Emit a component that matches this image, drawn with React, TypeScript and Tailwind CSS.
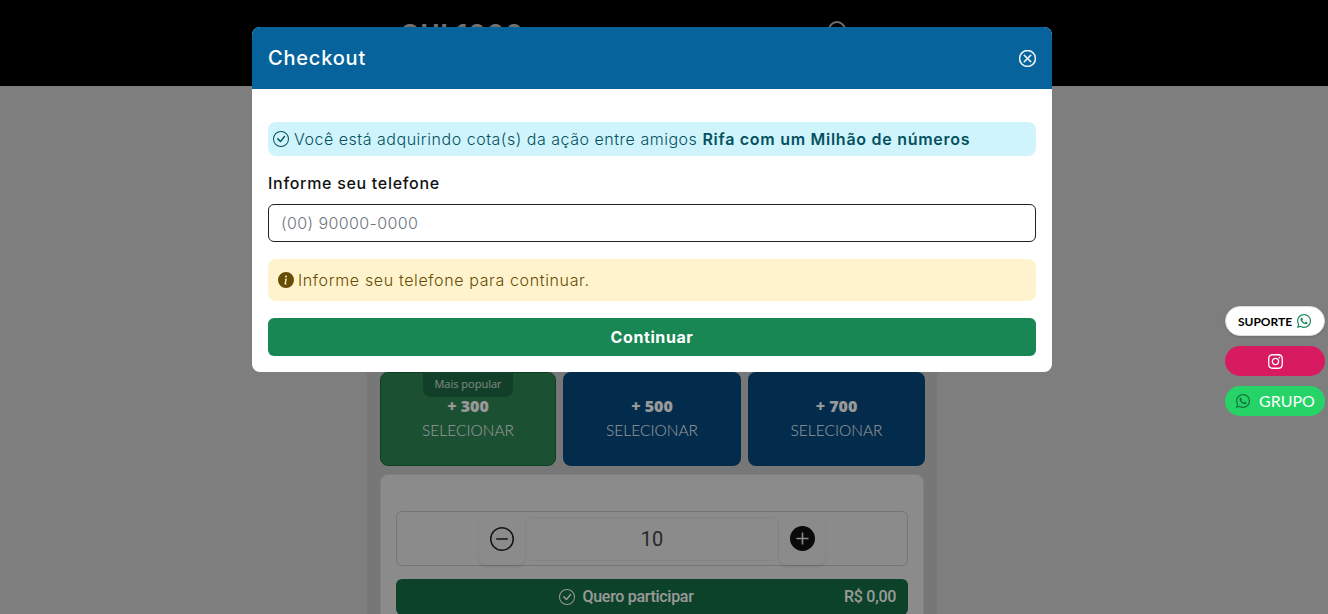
import { BsCheckCircle, BsXCircle, BsDashCircle, BsPlusCircleFill, BsInfoCircleFill } from "react-icons/bs";
import { FaWhatsapp, FaInstagram } from "react-icons/fa";
import { Search } from "lucide-react";

const inter = "font-['Inter',sans-serif]";

function Pack({ n, popular, width }: { n: string; popular?: boolean; width: string }) {
  return (
    <div className={`relative h-[94px] ${width} rounded-lg flex flex-col items-center ${popular ? "pt-[22px] bg-[#2f8555] border border-[#1a6a3e]" : "pt-[23px] bg-[#04487f]"}`}>
      {popular && (
        <div className="absolute top-[-1px] left-1/2 -translate-x-1/2 w-[90px] h-[25px] rounded-b-lg bg-[#1e6a42] text-white/80 text-[11px] leading-[24px] text-center font-['Open_Sans',sans-serif]">
          Mais popular
        </div>
      )}
      <div className="font-['Noto_Sans',sans-serif] font-black text-[16px] leading-[22px] text-white">+ {n}</div>
      <div className="font-['Lato',sans-serif] font-light text-[15.5px] leading-[26px] text-white">SELECIONAR</div>
    </div>
  );
}

export default function App() {
  return (
    <div className="relative h-[614px] w-[1328px] overflow-hidden bg-[#d2d2d2]">
      <header className="h-[86px] bg-black flex text-[#bbbbbb] overflow-hidden">
        <div className="ml-[400px] mt-[22px] font-['Inter',sans-serif] font-bold text-[26px] leading-[24px] w-[426px] tracking-[1px]">GUI 1000</div>
        <Search size={24} strokeWidth={2} className="mt-[19px]" />
      </header>
      <main className="ml-[367px] w-[570px] h-[528px] bg-[#c6c6c6] pl-[13px] pr-[12px] pt-[286px]">
        <div className="flex gap-[7px]">
          <Pack n="300" popular width="w-[176px]" />
          <Pack n="500" width="w-[178px]" />
          <Pack n="700" width="w-[177px]" />
        </div>
        <div className="mt-[8px] rounded-lg bg-[#e8e8e8] border border-[#d6d6d6] h-[200px] w-[544px] px-[15px] pt-[36px]">
          <div className="h-[55px] rounded-md border border-[#c4c4c4] flex justify-center items-center">
            <button className="w-[46px] h-[52px] rounded-lg bg-[#e8e8e8] shadow-[0_2px_3px_rgba(0,0,0,0.08)] flex items-center justify-center text-[#222]"><BsDashCircle size={24} /></button>
            <div className="w-[254px] h-[44px] rounded-lg border border-[#dcdcdc] text-center font-['Roboto',sans-serif] text-[20px] leading-[42px] text-[#444]">10</div>
            <button className="w-[46px] h-[52px] rounded-lg bg-[#e8e8e8] shadow-[0_2px_3px_rgba(0,0,0,0.08)] flex items-center justify-center text-[#111]"><BsPlusCircleFill size={25} /></button>
          </div>
          <div className="mt-[13px] h-[36px] rounded-md bg-[#156f45] flex items-center pl-[12px] pr-[12px] font-['Roboto',sans-serif] font-medium text-[16px] tracking-[-0.3px] text-white">
            <div className="flex-1 flex items-center justify-center">
              <BsCheckCircle size={16} className="mr-[8px]" /> Quero participar
            </div>
            <span>R$ 0,00</span>
          </div>
        </div>
      </main>

      <div className="absolute inset-0 bg-black/40" />

      <div className="absolute right-[3px] top-[306px] flex flex-col gap-[10px] w-[100px]">
        <div className="h-[30px] rounded-full bg-white border border-[#ddd] shadow flex items-center justify-center gap-[4px] font-['Lato',sans-serif] font-bold text-[12px] text-black">
          <span className="mt-[1px]">SUPORTE</span> <FaWhatsapp size={16} className="text-[#198754]" />
        </div>
        <div className="h-[30px] rounded-full bg-[#d81b60] flex items-center justify-center text-white"><FaInstagram size={17} /></div>
        <div className="h-[30px] rounded-full bg-[#25d366] flex items-center justify-center gap-[8px] font-['Lato',sans-serif] text-[16px] text-white">
          <FaWhatsapp size={16} className="text-[#14713a]" /> GRUPO
        </div>
      </div>

      <div className={`absolute left-[252px] top-[27px] w-[800px] rounded-lg bg-white overflow-hidden ${inter}`}>
        <div className="h-[62px] bg-[#06639b] flex items-center justify-between pl-[16px] pr-[16px] text-white">
          <h5 className="text-[20px] font-medium tracking-[0.8px]">Checkout</h5>
          <BsXCircle size={17} strokeWidth={0.5} />
        </div>
        <div className="px-[16px] pt-[33px] pb-[16px]">
          <div className="h-[34px] rounded-lg bg-[#cff4fc] flex items-center pl-[5px] text-[#055160] text-[16px] font-light tracking-[0.52px] whitespace-nowrap">
            <BsCheckCircle size={16} className="mr-[5px] shrink-0" />
            <span>Você está adquirindo cota(s) da ação entre amigos&nbsp;<span className="font-semibold tracking-[0.72px]">Rifa com um Milhão de números</span></span>
          </div>
          <label className="block mt-[15px] text-[16px] font-medium leading-[24px] text-[#111] tracking-[0.7px]">Informe seu telefone</label>
          <div className="mt-[9px] h-[38px] rounded-md border border-[#222] flex items-center px-[12px] text-[16px] font-light text-[#6c757d] tracking-[0.4px]">(00) 90000-0000</div>
          <div className="mt-[17px] h-[42px] rounded-lg bg-[#fff3cd] flex items-center pl-[10px] text-[16px] font-light text-[#664d03] tracking-[0.63px]">
            <BsInfoCircleFill size={16} className="mr-[4px]" /> Informe seu telefone para continuar.
          </div>
          <button className="block mt-[17px] h-[38px] w-full rounded-md bg-[#198754] text-white text-[16px] font-bold tracking-[0.6px]">Continuar</button>
        </div>
      </div>
    </div>
  );
}
